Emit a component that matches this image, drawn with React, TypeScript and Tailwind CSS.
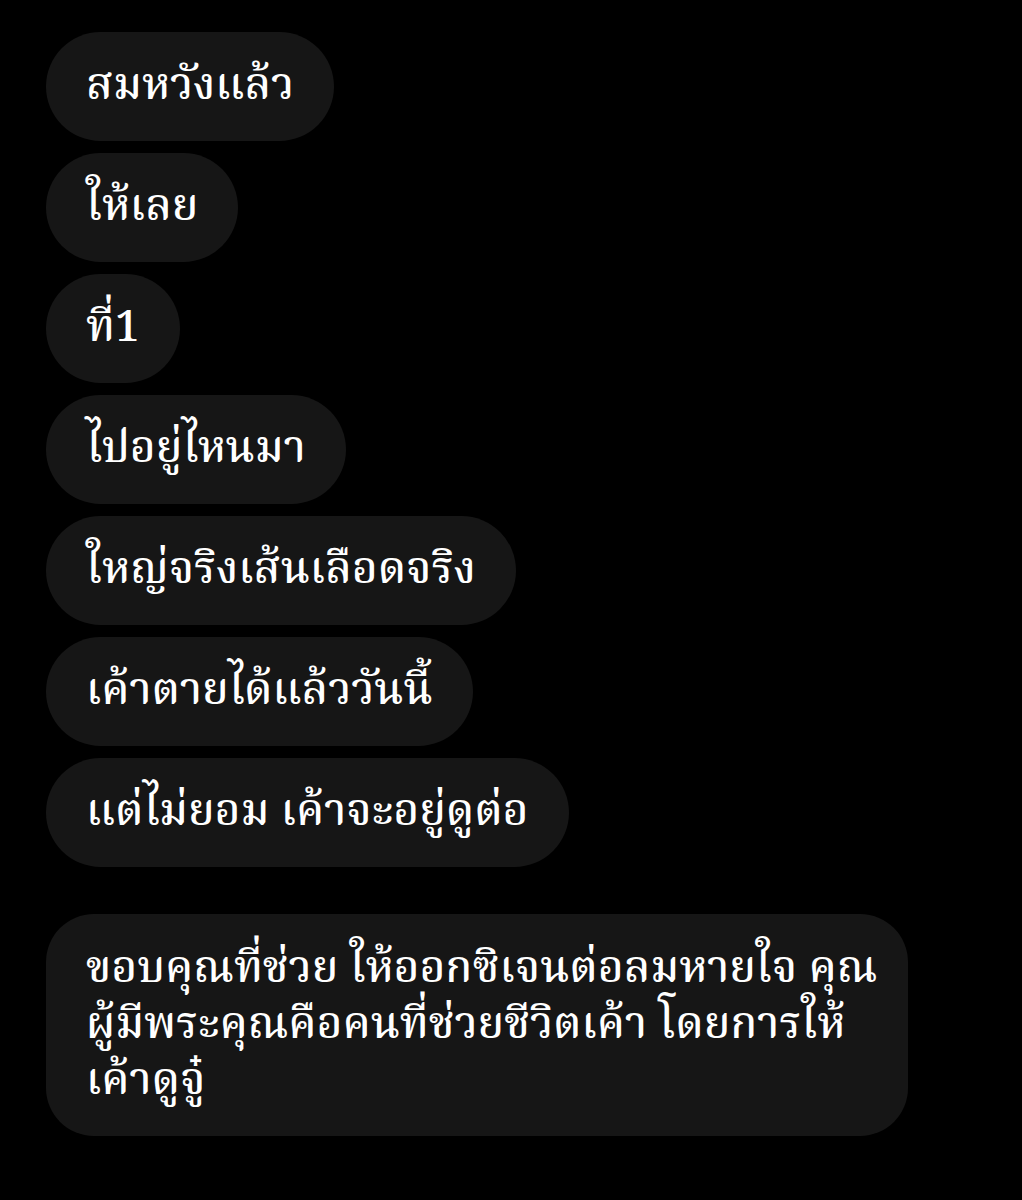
const messages = [
  'สมหวังแล้ว',
  'ให้เลย',
  'ที่1',
  'ไปอยู่ไหนมา',
  'ใหญ่จริงเส้นเลือดจริง',
  'เค้าตายได้แล้ววันนี้',
  'แต่ไม่ยอม เค้าจะอยู่ดูต่อ',
]

function Bubble({ text }: { text: string }) {
  return (
    <div className="self-start h-[109px] flex items-center px-10 rounded-[55px] bg-[#161616] text-white text-[44px] font-medium">
      {text}
    </div>
  )
}

export default function App() {
  return (
    <div
      className="w-[1022px] h-[1200px] bg-black pl-[46px] pt-[32px] flex flex-col"
      style={{ fontFamily: '"Noto Serif Thai", "Noto Sans", sans-serif' }}
    >
      <div className="flex flex-col gap-[12px]">
        {messages.map((m) => (
          <Bubble key={m} text={m} />
        ))}
      </div>
      <div className="mt-[47px] w-[862px] h-[222px] rounded-[48px] bg-[#161616] text-white text-[44px] font-medium leading-[56px] pl-10 pr-6 pt-[28px]">
        <p>ขอบคุณที่ช่วย ให้ออกซิเจนต่อลมหายใจ คุณ</p>
        <p>ผู้มีพระคุณคือคนที่ช่วยชีวิตเค้า โดยการให้</p>
        <p>เค้าดูจู๋</p>
      </div>
    </div>
  )
}
